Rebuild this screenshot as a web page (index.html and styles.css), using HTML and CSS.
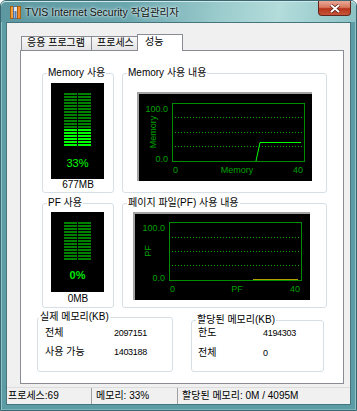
FILE: index.html
```html
<!DOCTYPE html>
<html>
<head>
    <meta charset="utf-8">
    <title>TVIS Internet Security 작업관리자</title>
    <link rel="stylesheet" href="styles.css">
</head>
<body>
    <div class="window">
        <div class="titlebar">
            <svg class="app-icon" width="11" height="13" viewBox="0 0 11 13">
                <rect x="0.5" y="0.5" width="3" height="12" fill="#f2a03a" stroke="#a8600f"/>
                <rect x="3.5" y="0.5" width="4" height="12" fill="#dce6f0" stroke="#52709a"/>
                <rect x="4.5" y="5" width="2" height="7" fill="#5a7cb0"/>
                <rect x="7.5" y="0.5" width="3" height="12" fill="#f08a30" stroke="#a8600f"/>
            </svg>
            <span class="title">TVIS Internet Security 작업관리자</span>
            <div class="close-btn">
                <svg width="12" height="9" viewBox="0 0 12 9">
                    <path d="M2 1 L10 8 M10 1 L2 8" stroke="#5a1a10" stroke-width="3.4"/>
                    <path d="M2 1 L10 8 M10 1 L2 8" stroke="#fff" stroke-width="2"/>
                </svg>
            </div>
        </div>

        <div class="client">
            <div class="tabs">
                <div class="tab tab-apps">응용 프로그램</div>
                <div class="tab tab-procs">프로세스</div>
                <div class="tab tab-perf selected">성능</div>
            </div>

            <div class="panel">
                <div class="perf-grid">
                    <fieldset class="group">
                        <legend>Memory 사용</legend>
                        <div class="meter meter-mem">
                            <div class="bars bars-mem">
                                <div class="bar-col"><div class="bar-fill" style="height: 18px"></div></div>
                                <div class="bar-col"><div class="bar-fill" style="height: 18px"></div></div>
                            </div>
                            <div class="meter-value">33%</div>
                        </div>
                        <div class="meter-caption">677MB</div>
                    </fieldset>

                    <fieldset class="group">
                        <legend>Memory 사용 내용</legend>
                        <div class="graph graph-mem">
                            <svg width="173" height="87" viewBox="0 0 173 87">
                                <rect x="33.5" y="9.5" width="132" height="58" fill="none" stroke="#008c00"/>
                                <g stroke="#00a800" stroke-dasharray="1 2">
                                    <line x1="36" y1="23.5" x2="164" y2="23.5"/>
                                    <line x1="36" y1="38.5" x2="164" y2="38.5"/>
                                    <line x1="36" y1="52.5" x2="164" y2="52.5"/>
                                </g>
                                <polyline points="117,67 121,48.5 162,48.5" fill="none" stroke="#00ff00"/>
                                <g class="axis-text">
                                    <text x="29" y="17.5" text-anchor="end">100.0</text>
                                    <text x="29" y="67.5" text-anchor="end">0.0</text>
                                    <text x="34" y="78.5">0</text>
                                    <text x="98" y="78.5" text-anchor="middle">Memory</text>
                                    <text x="164" y="78.5" text-anchor="end">40</text>
                                    <text class="axis-title" transform="translate(17 38) rotate(-90)" text-anchor="middle">Memory</text>
                                </g>
                            </svg>
                        </div>
                    </fieldset>

                    <fieldset class="group">
                        <legend>PF 사용</legend>
                        <div class="meter meter-pf">
                            <div class="bars bars-pf">
                                <div class="bar-col"><div class="bar-fill" style="height: 0px"></div></div>
                                <div class="bar-col"><div class="bar-fill" style="height: 0px"></div></div>
                            </div>
                            <div class="meter-value meter-value-pf">0%</div>
                        </div>
                        <div class="meter-caption caption-pf">0MB</div>
                    </fieldset>

                    <fieldset class="group">
                        <legend>페이지 파일(PF) 사용 내용</legend>
                        <div class="graph graph-pf">
                            <svg width="175" height="86" viewBox="0 0 175 86">
                                <rect x="34.5" y="8.5" width="132" height="58" fill="none" stroke="#008c00"/>
                                <g stroke="#00a800" stroke-dasharray="1 2">
                                    <line x1="37" y1="23.5" x2="165" y2="23.5"/>
                                    <line x1="37" y1="37.5" x2="165" y2="37.5"/>
                                    <line x1="37" y1="51.5" x2="165" y2="51.5"/>
                                </g>
                                <line x1="118" y1="65.5" x2="163" y2="65.5" stroke="#b0a000"/>
                                <g class="axis-text">
                                    <text x="30" y="16.5" text-anchor="end">100.0</text>
                                    <text x="30" y="66.5" text-anchor="end">0.0</text>
                                    <text x="35" y="77.5">0</text>
                                    <text x="102" y="77.5" text-anchor="middle">PF</text>
                                    <text x="165" y="77.5" text-anchor="end">40</text>
                                    <text class="axis-title" transform="translate(16 37) rotate(-90)" text-anchor="middle">PF</text>
                                </g>
                            </svg>
                        </div>
                    </fieldset>
                </div>

                <div class="stats">
                    <fieldset class="group stat-group stat-physical">
                        <legend>실제 메모리(KB)</legend>
                        <div class="stat-rows">
                            <span>전체</span><span class="num">2097151</span>
                            <span>사용 가능</span><span class="num">1403188</span>
                        </div>
                    </fieldset>
                    <fieldset class="group stat-group stat-commit">
                        <legend>할당된 메모리(KB)</legend>
                        <div class="stat-rows">
                            <span>한도</span><span class="num">4194303</span>
                            <span>전체</span><span class="num">0</span>
                        </div>
                    </fieldset>
                </div>
            </div>

            <div class="statusbar">
                <div class="pane pane-procs">프로세스:69</div>
                <div class="pane pane-mem">메모리: 33%</div>
                <div class="pane pane-commit">할당된 메모리: 0M / 4095M</div>
            </div>
        </div>
    </div>
</body>
</html>
```

FILE: styles.css
```css
* {
    box-sizing: border-box;
}

body {
    margin: 0;
    font-family: "Liberation Sans", "Noto Sans CJK KR", sans-serif;
    font-size: 10px;
    color: #000;
}

.window {
    width: 357px;
    height: 411px;
    display: flex;
    flex-direction: column;
    padding: 0 5px 5px 5px;
    border: 1px solid #3b6770;
    border-radius: 6px 6px 0 0;
    background: #5c9ca5;
    box-shadow: inset 1px 0 0 #8fc3c8, inset -1px 0 0 #8fc3c8, inset 0 -1px 0 #7db4ba;
}

/* title bar */
.titlebar {
    height: 21px;
    margin: 0 -5px;
    padding: 0 5px 0 9px;
    display: flex;
    align-items: center;
    border-radius: 5px 5px 0 0;
    background: linear-gradient(100deg, #5d98a1 0%, #6aa6ae 35%, #9ccccd 62%, #b3dcdb 78%, #8cc2c5 100%);
    box-shadow: inset 0 1px 0 #cfe9ea;
}

.app-icon {
    margin-right: 4px;
    margin-top: 1px;
}

.title {
    font-size: 10.5px;
    color: #111;
    text-shadow: 0 0 4px #e8f6f6, 0 0 2px #e8f6f6;
}

.close-btn {
    margin-left: auto;
    align-self: flex-start;
    width: 33px;
    height: 15px;
    display: flex;
    align-items: center;
    justify-content: center;
    border: 1px solid #62261c;
    border-top: none;
    border-radius: 0 0 4px 4px;
    background: linear-gradient(#e9a898 0%, #d8785e 45%, #b8341c 55%, #c65638 100%);
}

/* client area */
.client {
    flex: 1;
    display: flex;
    flex-direction: column;
    padding: 11px 0 0 13px;
    border: 1px solid #46757d;
    background: #f0f0f0;
}

.tabs {
    height: 16px;
    display: flex;
    align-items: flex-end;
    margin-left: 1px;
}

.tab {
    height: 14px;
    padding: 0 0 0 5px;
    line-height: 12px;
    border: 1px solid #898c95;
    border-bottom: none;
    background: linear-gradient(#f7f7f7, #e5e5e5);
    white-space: nowrap;
}

.tab-apps {
    width: 71px;
}

.tab-procs {
    width: 47px;
    margin-left: -1px;
}

.tab-perf {
    width: 46px;
    margin-left: -1px;
}

.tab.selected {
    height: 17px;
    margin-bottom: -1px;
    padding: 1px 0 0 7px;
    background: #fff;
    position: relative;
    z-index: 1;
}

.panel {
    width: 324px;
    height: 334px;
    padding-top: 16px;
    border: 1px solid #898c95;
    background: #fff;
}

.perf-grid {
    display: grid;
    grid-template-columns: 72px 205px;
    grid-template-rows: 126px 111px;
    column-gap: 8px;
    row-gap: 4px;
    margin-left: 21px;
}

/* group boxes */
.group {
    margin: 0;
    padding: 0;
    min-width: 0;
    border: 1px solid #d5dfe5;
    border-radius: 3px;
}

.group legend {
    margin-left: 4px;
    padding: 0 1px;
    line-height: 12px;
}

/* usage meters */
.meter {
    width: 53px;
    margin: 4px 0 0 8px;
    padding-top: 10px;
    background: #000;
    display: flex;
    flex-direction: column;
    align-items: center;
}

.meter-mem {
    height: 96px;
}

.meter-pf {
    height: 80px;
    margin-top: 3px;
}

.bars {
    display: flex;
    gap: 1px;
}

.bars-mem {
    height: 54px;
}

.bars-pf {
    height: 39px;
}

.bar-col {
    width: 13px;
    display: flex;
    flex-direction: column;
    justify-content: flex-end;
    background: repeating-linear-gradient(to bottom, #008200 0 2px, #000 2px 3px);
}

.bar-fill {
    background: repeating-linear-gradient(to bottom, #00ff00 0 2px, #000 2px 3px);
}

.meter-value {
    margin-top: 10px;
    line-height: 12px;
    font-size: 11px;
    color: #00ff00;
}

.meter-value-pf {
    margin-top: 8px;
    font-weight: bold;
    color: #00e800;
}

.meter-caption {
    line-height: 12px;
    text-align: center;
}

.caption-pf {
    margin-top: 1px;
}

/* history graphs */
.graph {
    background: #000;
    border-top: 2px solid #a3a3a3;
    border-left: 2px solid #a3a3a3;
}

.graph svg {
    display: block;
}

.graph-mem {
    width: 175px;
    height: 89px;
    margin: 13px 0 0 14px;
}

.graph-pf {
    width: 177px;
    height: 88px;
    margin: 3px 0 0 10px;
}

.axis-text {
    font-family: "Liberation Sans", sans-serif;
    font-size: 9px;
    fill: #00a000;
}

.axis-text .axis-title {
    font-size: 9px;
}

/* memory totals */
.stats {
    display: flex;
    gap: 18px;
    height: 61px;
    margin: 3px 0 0 16px;
}

.stat-physical {
    width: 136px;
}

.stat-physical legend {
    margin-left: 1px;
}

.stat-commit {
    width: 133px;
    margin-top: 3px;
}

.stat-rows {
    display: grid;
    grid-template-columns: 69px auto;
    row-gap: 7px;
    padding: 4px 0 0 7px;
    line-height: 12px;
}

.stat-commit .stat-rows {
    grid-template-columns: 65px auto;
    padding: 1px 0 0 6px;
    row-gap: 8px;
}

.num {
    font-size: 9px;
    letter-spacing: -0.3px;
}

/* status bar */
.statusbar {
    height: 17px;
    margin: 3px 0 0 -13px;
    display: flex;
    border-top: 1px solid #dcdcdc;
    line-height: 15px;
}

.pane {
    border-right: 1px solid #a0a0a0;
    white-space: nowrap;
}

.pane-procs {
    width: 85px;
    padding-left: 1px;
}

.pane-mem {
    width: 86px;
    padding-left: 4px;
}

.pane-commit {
    flex: 1;
    padding-left: 4px;
    border-right: none;
}
```
